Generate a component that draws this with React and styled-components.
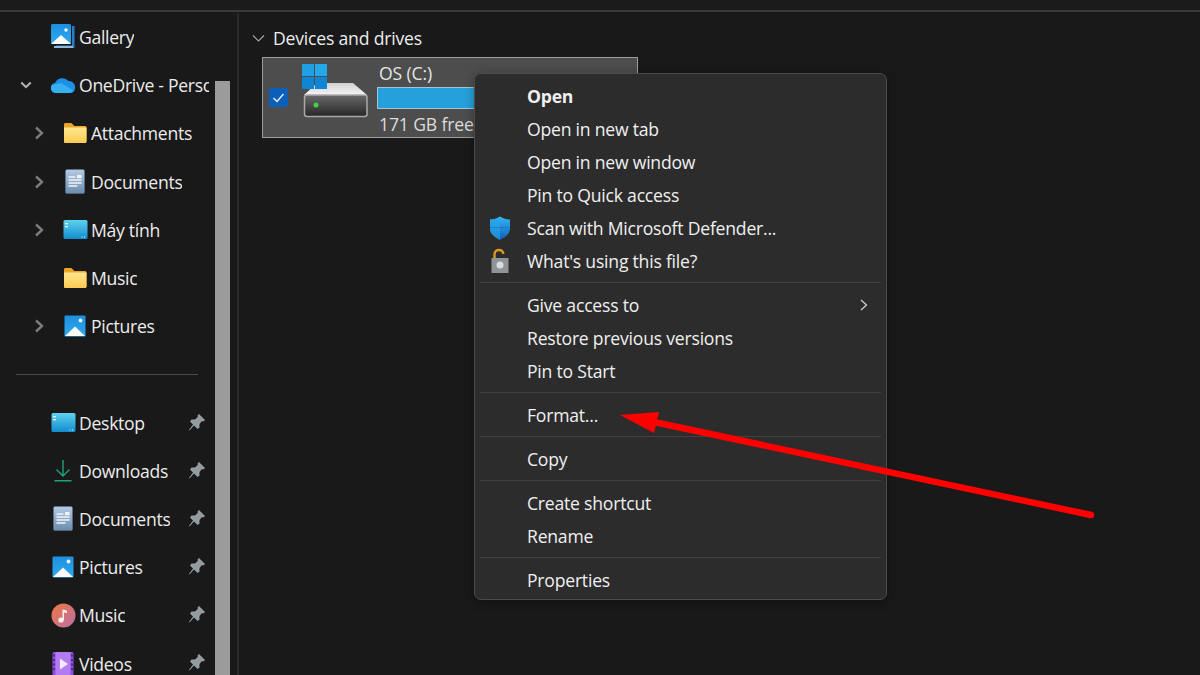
import React from "react";
import styled, { createGlobalStyle } from "styled-components";

const Global = createGlobalStyle`
  html, body { margin: 0; padding: 0; background: #191919; }
  body { font-family: "Open Sans", "Noto Sans", "Liberation Sans", sans-serif; overflow: hidden; }
  #root { width: 1200px; height: 675px; overflow: hidden; }
`;

const Page = styled.div`
  position: relative;
  width: 1200px;
  height: 675px;
  overflow: hidden;
  background: #191919;
  display: flex;
  flex-direction: column;
  color: #ececec;
`;
const TopStrip = styled.div`
  height: 10px;
  flex: none;
  background: #1b1b1b;
  border-bottom: 2px solid #3a3a3a;
  margin-bottom: 1px;
`;
const Body = styled.div`
  flex: 1;
  display: flex;
  min-height: 0;
`;
const Sidebar = styled.nav`
  position: relative;
  width: 237px;
  flex: none;
  border-right: 2px solid #2b2b2b;
  overflow: hidden;
`;
const ScrollThumb = styled.div`
  position: absolute;
  left: 215px;
  top: 68px;
  bottom: 0;
  width: 15px;
  background: #9b9b9b;
`;
const Row = styled.div`
  height: 48.2px;
  display: flex;
  align-items: center;
  padding-left: ${(p) => (p.$level === 2 ? 33 : 20)}px;
  position: relative;
  font-size: 17.6px;
  letter-spacing: -0.3px;
  white-space: nowrap;
`;
const Chevron = styled.span`
  width: 12px;
  height: 16px;
  margin-right: 1px;
  display: flex;
  align-items: center;
  justify-content: center;
  flex: none;
`;
const IconSlot = styled.span`
  width: 28px;
  height: 28px;
  margin: 0 2px 0 ${(p) => (p.$level === 2 ? 15 : 16)}px;
  display: flex;
  align-items: center;
  justify-content: center;
  flex: none;
`;
const Label = styled.span`
  display: block;
  max-width: ${(p) => p.$clip || "none"};
  overflow: hidden;
`;
const Pin = styled.span`
  position: absolute;
  left: 188px;
  top: 14px;
  width: 18px;
  height: 20px;
`;
const DividerRow = styled.div`
  height: 48.2px;
  display: flex;
  align-items: center;
  padding-left: 16px;
`;
const DividerLine = styled.div`
  width: 182px;
  height: 1px;
  background: #4a4a4a;
`;
const Main = styled.main`
  flex: 1;
  padding: 11px 0 0 13px;
  min-width: 0;
`;
const SectionHead = styled.div`
  display: flex;
  align-items: center;
  gap: 8px;
  height: 28px;
  margin-bottom: 5px;
  font-size: 17.6px;
  letter-spacing: -0.2px;
`;
const Tile = styled.div`
  width: 376px;
  height: 81px;
  margin-left: 10px;
  box-sizing: border-box;
  background: #4d4d4d;
  border: 1px solid #9c9c9c;
  display: flex;
  position: relative;
`;
const Check = styled.span`
  width: 19px;
  height: 19px;
  margin: 30px 0 0 6px;
  background: #0a5fb8;
  border-radius: 2px;
  display: flex;
  align-items: center;
  justify-content: center;
  flex: none;
`;
const DriveIcon = styled.span`
  width: 67px;
  height: 56px;
  margin: 6px 0 0 13px;
  flex: none;
`;
const DriveInfo = styled.div`
  flex: 1;
  margin-left: 9px;
  padding-right: 7px;
  display: flex;
  flex-direction: column;
  font-size: 17.6px;
  letter-spacing: -0.15px;
`;
const DriveName = styled.div`
  height: 29px;
  line-height: 30px;
  padding-left: 2px;
  color: #e6e6e6;
`;
const DriveBar = styled.div`
  height: 22px;
  box-sizing: border-box;
  border: 1px solid #a8c4d4;
  background: #26a0da;
`;
const DriveFree = styled.div`
  padding: 3px 0 0 2px;
  color: #dcdcdc;
`;
const Menu = styled.div`
  position: absolute;
  left: 474px;
  top: 73px;
  width: 413px;
  height: 527px;
  box-sizing: border-box;
  background: #2c2c2c;
  border: 1px solid #4b4b4b;
  border-radius: 7px;
  padding: 5px 5px 4px 5px;
  box-shadow: 0 2px 10px rgba(0, 0, 0, 0.35);
  font-size: 17.6px;
  letter-spacing: -0.22px;
`;
const MenuItem = styled.div`
  height: 33px;
  display: flex;
  align-items: center;
  padding-left: 47px;
  position: relative;
  color: #f0f0f0;
  font-weight: ${(p) => (p.$bold ? 700 : 400)};
  white-space: nowrap;
`;
const MenuIcon = styled.span`
  position: absolute;
  left: 7px;
  top: 3px;
  width: 26px;
  height: 27px;
`;
const SubArrow = styled.span`
  position: absolute;
  right: 10px;
  top: 6px;
  width: 14px;
  height: 16px;
`;
const MenuSep = styled.div`
  height: 1px;
  margin: 5px 0;
  background: #414141;
`;
const Arrow = styled.svg`
  position: absolute;
  left: 0;
  top: 0;
  pointer-events: none;
`;

const ChevronRight = () => (
  <svg width="12" height="16" viewBox="0 0 12 16">
    <path d="M3 2.5 9 8l-6 5.5" fill="none" stroke="#7c7c7c" strokeWidth="2.4" />
  </svg>
);
const ChevronDown = () => (
  <svg width="14" height="12" viewBox="0 0 14 12">
    <path d="M1.5 3 7 8.5 12.5 3" fill="none" stroke="#b4b4b4" strokeWidth="2.4" />
  </svg>
);

const Defs = () => (
  <svg width="0" height="0" style={{ position: "absolute" }}>
    <defs>
      <linearGradient id="folder" x1="0" y1="0" x2="0" y2="1">
        <stop offset="0" stopColor="#ffe68f" />
        <stop offset="1" stopColor="#fbcb52" />
      </linearGradient>
      <linearGradient id="doc" x1="0" y1="0" x2="0" y2="1">
        <stop offset="0" stopColor="#b4cbe2" />
        <stop offset="1" stopColor="#6d8cac" />
      </linearGradient>
      <linearGradient id="desk" x1="0" y1="0" x2="0" y2="1">
        <stop offset="0" stopColor="#5ed2ee" />
        <stop offset="1" stopColor="#128ccf" />
      </linearGradient>
      <linearGradient id="pic" x1="0" y1="0" x2="0" y2="1">
        <stop offset="0" stopColor="#1d90e0" />
        <stop offset="1" stopColor="#2fa9ee" />
      </linearGradient>
      <linearGradient id="music" x1="0" y1="0" x2="1" y2="1">
        <stop offset="0" stopColor="#f0793f" />
        <stop offset="1" stopColor="#b86ea6" />
      </linearGradient>
      <linearGradient id="shield" x1="0" y1="0" x2="0" y2="1">
        <stop offset="0" stopColor="#35b6f2" />
        <stop offset="1" stopColor="#0f5fb8" />
      </linearGradient>
      <linearGradient id="disk" x1="0" y1="0" x2="0" y2="1">
        <stop offset="0" stopColor="#6a6a6a" />
        <stop offset="1" stopColor="#262626" />
      </linearGradient>
      <linearGradient id="diskTop" x1="0" y1="0" x2="0" y2="1">
        <stop offset="0" stopColor="#d0d0d0" />
        <stop offset="1" stopColor="#f6f6f6" />
      </linearGradient>
    </defs>
  </svg>
);

const GalleryIcon = () => (
  <svg width="26" height="26" viewBox="0 0 26 26">
    <path d="M22 2h2.5v22H6v-2.5h16z" fill="#2a7ec8" />
    <rect x="4" y="22" width="19" height="2" fill="#8fb9dc" />
    <rect x="1" y="0" width="20" height="20" rx="1.5" fill="url(#pic)" />
    <path d="M1 20 11 11l10 9z" fill="#fafafa" />
    <circle cx="16" cy="6" r="1.7" fill="#fff" />
  </svg>
);
const CloudIcon = () => (
  <svg width="26" height="18" viewBox="0 0 26 18">
    <path d="M6 17a5 5 0 0 1-1-9.9A8 8 0 0 1 18.5 5 6 6 0 0 1 25 12c0 3-2 5-5 5z" fill="#1c8fe6" />
    <path d="M6 17a5 5 0 0 1-4-8l9-2 12 7c-1 2-2 3-4 3z" fill="#36b0f0" />
  </svg>
);
const FolderIcon = () => (
  <svg width="24" height="20" viewBox="0 0 24 20">
    <path d="M1 1.5C1 .7 1.6 0 2.4 0h6l3 3H22c.8 0 1.5.7 1.5 1.5v14c0 .8-.7 1.5-1.5 1.5H2.4C1.6 20 1 19.3 1 18.5z" fill="#e8a526" />
    <path d="M1 4.5h22.5v14c0 .8-.7 1.5-1.5 1.5H2.4C1.6 20 1 19.3 1 18.5z" fill="url(#folder)" />
  </svg>
);
const DocIcon = () => (
  <svg width="20" height="25" viewBox="0 0 20 25">
    <rect x="0.5" y="0.5" width="19" height="24" rx="1.5" fill="url(#doc)" stroke="#56728f" strokeWidth="0.6" />
    <path d="M3.5 8h7M3.5 11h13M3.5 14h13M3.5 17h9" stroke="#eef4fa" strokeWidth="1.3" />
    <rect x="12" y="6" width="4.5" height="3.2" fill="#eef4fa" />
  </svg>
);
const DesktopIcon = () => (
  <svg width="25" height="19" viewBox="0 0 25 19">
    <rect x="0.5" y="0" width="24" height="19" rx="1.5" fill="url(#desk)" />
    <rect x="2" y="3" width="3" height="1.3" fill="#e6fbff" />
    <rect x="2" y="6" width="3" height="1.3" fill="#e6fbff" />
    <path d="M18.5 17h1M21 17h1" stroke="#e6fbff" strokeWidth="1.2" />
  </svg>
);
const PictureIcon = () => (
  <svg width="22" height="22" viewBox="0 0 22 22">
    <rect x="0.5" y="0.5" width="21" height="21" rx="1" fill="url(#pic)" />
    <path d="M1 21 11 11.5 21 21z" fill="#fafafa" />
    <circle cx="16.5" cy="5.5" r="1.9" fill="#e8f6ff" />
  </svg>
);
const DownloadIcon = () => (
  <svg width="18" height="22" viewBox="0 0 18 22">
    <path d="M9 0v16M2.5 9.5 9 16l6.5-6.5M0.5 20.800h17" fill="none" stroke="#1fa37c" strokeWidth="1.4" />
  </svg>
);
const MusicIcon = () => (
  <svg width="25" height="25" viewBox="0 0 25 25">
    <circle cx="12.5" cy="12.5" r="12" fill="url(#music)" />
    <circle cx="10" cy="17" r="2.6" fill="#fdeef0" />
    <path d="M11.5 17V6.5c2 .2 3.5 1 4.500 1.300v2.400l-3-.8V17z" fill="#fdeef0" />
  </svg>
);
const VideoIcon = () => (
  <svg width="22" height="24" viewBox="0 0 22 24">
    <rect x="0.5" y="0" width="21" height="24" rx="1.5" fill="#8f4fe0" />
    <rect x="3.5" y="0" width="15" height="24" fill="#b27bf0" />
    <path d="M2 2.5v2M2 7v2M2 11.5v2M2 16v2M20 2.5v2M20 7v2M20 11.5v2M20 16v2" stroke="#3b1c6e" strokeWidth="1.5" />
    <path d="M8 6.5 16 12l-8 5.500z" fill="#f3e9ff" />
  </svg>
);
const PinIcon = () => (
  <svg width="18" height="20" viewBox="0 0 18 20">
    <path d="M11 1 17 7 15.5 8.5 14 8 11.5 11 11.5 14.5 9.5 16 6 12.5 1.5 17.5 1 17 5 11.5 2 8.5 3.5 6.5 7 6.5 9.8 4 9.5 2.500z" fill="#959da4" />
  </svg>
);
const ShieldIcon = () => (
  <svg width="26" height="27" viewBox="0 0 26 27">
    <path d="M13 2.5c3 2 6 3 10 3v9c0 5-4 8.500-10 11.500C7 23 3 19.500 3 14.500v-9c4 0 7-1 10-3z" fill="url(#shield)" />
    <path d="M13 2.5v23.500C7 23 3 19.500 3 14.500v-9c4 0 7-1 10-3z" fill="#2aa5ea" opacity=".6" />
    <path d="M3 13.5h20" stroke="#0f6cc0" strokeWidth=".8" opacity=".6" />
  </svg>
);
const LockIcon = () => (
  <svg width="26" height="27" viewBox="0 0 26 27">
    <path d="M7.5 12V7.5C7.5 4.5 9.5 3 12 3s4 1.500 4.500 4" fill="none" stroke="#d99a1f" strokeWidth="2.4" />
    <rect x="4.5" y="11" width="17" height="15" fill="#8f9497" />
    <circle cx="13" cy="18" r="3.5" fill="#d6dde2" />
  </svg>
);
const DriveArt = () => (
  <svg width="67" height="56" viewBox="0 0 67 56">
    <path d="M16 19H52L66 31H3z" fill="url(#diskTop)" />
    <rect x="3.5" y="31" width="62.5" height="21.5" rx="2.5" fill="url(#disk)" stroke="#a9a9a9" strokeWidth="1.5" />
    <circle cx="15" cy="41" r="2.5" fill="#3fd23f" />
    <rect x="1" y="0" width="12" height="12" fill="#1f9fe4" />
    <rect x="14" y="0" width="12" height="12" fill="#25a8ea" />
    <rect x="1" y="13" width="12" height="12" fill="#0f86d4" />
    <rect x="14" y="13" width="12" height="12" fill="#0f86d4" />
  </svg>
);

const quick = [
  { label: "Gallery", icon: <GalleryIcon /> },
  { label: "OneDrive - Personal", icon: <CloudIcon />, open: true, clip: "130px" },
  { label: "Attachments", icon: <FolderIcon />, level: 2, more: true },
  { label: "Documents", icon: <DocIcon />, level: 2, more: true },
  { label: "Máy tính", icon: <DesktopIcon />, level: 2, more: true },
  { label: "Music", icon: <FolderIcon />, level: 2 },
  { label: "Pictures", icon: <PictureIcon />, level: 2, more: true },
];
const pinned = [
  { label: "Desktop", icon: <DesktopIcon /> },
  { label: "Downloads", icon: <DownloadIcon /> },
  { label: "Documents", icon: <DocIcon /> },
  { label: "Pictures", icon: <PictureIcon /> },
  { label: "Music", icon: <MusicIcon /> },
  { label: "Videos", icon: <VideoIcon /> },
];

const NavRow = ({ item, pin }) => (
  <Row $level={item.level}>
    <Chevron>{item.open ? <ChevronDown /> : item.more ? <ChevronRight /> : null}</Chevron>
    <IconSlot $level={item.level}>{item.icon}</IconSlot>
    <Label $clip={item.clip}>{item.label}</Label>
    {pin && (
      <Pin>
        <PinIcon />
      </Pin>
    )}
  </Row>
);

const menuGroups = [
  [
    { t: "Open", bold: true },
    { t: "Open in new tab" },
    { t: "Open in new window" },
    { t: "Pin to Quick access" },
    { t: "Scan with Microsoft Defender...", icon: <ShieldIcon /> },
    { t: "What's using this file?", icon: <LockIcon /> },
  ],
  [{ t: "Give access to", sub: true }, { t: "Restore previous versions" }, { t: "Pin to Start" }],
  [{ t: "Format..." }],
  [{ t: "Copy" }],
  [{ t: "Create shortcut" }, { t: "Rename" }],
  [{ t: "Properties" }],
];

export default function App() {
  return (
    <Page>
      <Global />
      <Defs />
      <TopStrip />
      <Body>
        <Sidebar>
          {quick.map((q) => (
            <NavRow key={q.label} item={q} />
          ))}
          <DividerRow>
            <DividerLine />
          </DividerRow>
          {pinned.map((q) => (
            <NavRow key={q.label} item={q} pin />
          ))}
          <ScrollThumb />
        </Sidebar>
        <Main>
          <SectionHead>
            <svg width="13" height="9" viewBox="0 0 13 9">
              <path d="M1 1.5 6.5 7 12 1.5" fill="none" stroke="#a8a8a8" strokeWidth="1.1" />
            </svg>
            Devices and drives
          </SectionHead>
          <Tile>
            <Check>
              <svg width="13" height="11" viewBox="0 0 13 11">
                <path d="M1.5 6 5 9.5 11.5 2" fill="none" stroke="#eaf3ff" strokeWidth="1.4" />
              </svg>
            </Check>
            <DriveIcon>
              <DriveArt />
            </DriveIcon>
            <DriveInfo>
              <DriveName>OS (C:)</DriveName>
              <DriveBar />
              <DriveFree>171 GB free</DriveFree>
            </DriveInfo>
          </Tile>
        </Main>
      </Body>
      <Menu>
        {menuGroups.map((g, i) => (
          <React.Fragment key={i}>
            {i > 0 && <MenuSep />}
            {g.map((m) => (
              <MenuItem key={m.t} $bold={m.bold}>
                {m.icon && <MenuIcon>{m.icon}</MenuIcon>}
                {m.t}
                {m.sub && (
                  <SubArrow>
                    <svg width="14" height="16" viewBox="0 0 14 16">
                      <path d="M4 3l5.5 5L4 13" fill="none" stroke="#cfcfcf" strokeWidth="1.3" />
                    </svg>
                  </SubArrow>
                )}
              </MenuItem>
            ))}
          </React.Fragment>
        ))}
      </Menu>
      <Arrow width="1200" height="675" viewBox="0 0 1200 675">
        <path d="M1091 515 654 422" stroke="#fe0000" strokeWidth="6.5" strokeLinecap="round" fill="none" />
        <path d="M620 415 659 412 654 433z" fill="#fe0000" />
      </Arrow>
    </Page>
  );
}
